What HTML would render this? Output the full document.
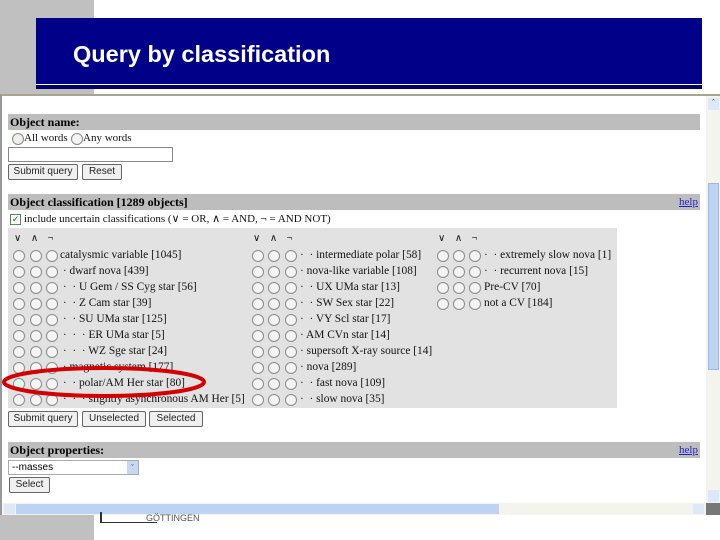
<!DOCTYPE html>
<html><head><meta charset="utf-8"><style>
body{margin:0;width:720px;height:540px;overflow:hidden;background:#fff;position:relative;font-family:"Liberation Serif",serif;}
.a{position:absolute;}
.hd{position:absolute;left:8px;width:692px;height:16px;background:#bdbdbd;font-size:12px;font-weight:bold;line-height:16px;padding-left:2px;box-sizing:border-box;}
.hd span{position:absolute;right:2px;top:0;font-weight:normal;color:#22c;text-decoration:underline;font-size:11px;}
.r{position:absolute;width:10px;height:10px;border:1px solid #8a8a8a;border-radius:50%;background:#f4f4f4;}
.t{position:absolute;font-size:11.4px;line-height:14px;white-space:nowrap;color:#111;}
.btn{position:absolute;height:14px;border:1px solid #666;border-radius:2px;background:#f0f0f0;font-family:"Liberation Sans",sans-serif;font-size:10px;line-height:14px;text-align:center;color:#222;}
</style></head><body>
<div class="a" style="left:0;top:0;width:94px;height:95px;background:#c0c0c0"></div>
<div class="a" style="left:36px;top:18px;width:666px;height:66px;background:#000088"></div>
<div class="a" style="left:36px;top:84px;width:666px;height:1px;background:#fff"></div>
<div class="a" style="left:36px;top:85px;width:666px;height:4px;background:#000066"></div>
<div class="a" style="left:73px;top:40px;color:#fff;font-family:'Liberation Sans',sans-serif;font-weight:bold;font-size:23.5px;line-height:28px">Query by classification</div>

<div class="a" style="left:0;top:94px;width:720px;height:421px;background:#fff;border-top:2px solid #a8a490;box-sizing:border-box;border-left:2px solid #999"></div>
<div class="a" style="left:706px;top:96px;width:14px;height:407px;background:#f4f4ee"></div>
<div class="a" style="left:708px;top:98px;width:11px;height:12px;background:#dde8f8;font-size:8px;text-align:center;color:#336">&#710;</div>
<div class="a" style="left:708px;top:183px;width:11px;height:187px;background:#bcd3f4;border:1px solid #9bb6e0;box-sizing:border-box"></div>
<div class="a" style="left:708px;top:490px;width:11px;height:12px;background:#dde8f8"></div>
<div class="a" style="left:2px;top:503px;width:704px;height:12px;background:#f4f4ee"></div>
<div class="a" style="left:4px;top:504px;width:11px;height:10px;background:#dde8f8"></div>
<div class="a" style="left:16px;top:504px;width:483px;height:10px;background:#bcd3f4"></div>
<div class="a" style="left:693px;top:504px;width:11px;height:10px;background:#dde8f8"></div>
<div class="a" style="left:706px;top:503px;width:14px;height:12px;background:#777"></div>
<div class="a" style="left:0;top:515px;width:94px;height:25px;background:#c0c0c0"></div>
<div class="a" style="left:100px;top:512px;width:55px;height:10px;border-bottom:1px solid #333;border-left:2px solid #333"></div>
<div class="t" style="left:146px;top:511px;font-size:9px;font-family:'Liberation Sans',sans-serif;color:#555">GÖTTINGEN</div>

<div class="hd" style="top:114px">Object name:</div>
<div class="r" style="left:12px;top:133px;background:#e8f2e8"></div>
<div class="t" style="left:24px;top:131px;font-size:11px">All words</div>
<div class="r" style="left:71px;top:133px"></div>
<div class="t" style="left:83px;top:131px;font-size:11px">Any words</div>
<div class="a" style="left:8px;top:147px;width:165px;height:15px;border:1px solid #888;box-sizing:border-box"></div>
<div class="btn" style="left:8px;top:164px;width:68px">Submit query</div>
<div class="btn" style="left:82px;top:164px;width:38px">Reset</div>

<div class="hd" style="top:194px">Object classification [1289 objects]<span>help</span></div>
<div class="a" style="left:10px;top:214px;width:9px;height:9px;border:1px solid #5a8a5a;font-size:9px;line-height:9px;color:#080;text-align:center">&#10003;</div>
<div class="t" style="left:24px;top:212px;font-size:11px">include uncertain classifications (∨ = OR, ∧ = AND, ¬ = AND NOT)</div>

<div class="a" style="left:8px;top:228px;width:609px;height:180px;background:#e2e2e2"></div>
<div class="t" style="left:14px;top:232px;font-size:10px;word-spacing:7px">∨ ∧ ¬</div>
<div class="t" style="left:253px;top:232px;font-size:10px;word-spacing:7px">∨ ∧ ¬</div>
<div class="t" style="left:438px;top:232px;font-size:10px;word-spacing:7px">∨ ∧ ¬</div>

<!-- col1 -->
<div class="r" style="left:13px;top:250px"></div><div class="r" style="left:30px;top:250px"></div><div class="r" style="left:46px;top:250px"></div><div class="t" style="left:60px;top:248px">catalysmic variable [1045]</div>
<div class="r" style="left:13px;top:266px"></div><div class="r" style="left:30px;top:266px"></div><div class="r" style="left:46px;top:266px"></div><div class="t" style="left:60px;top:264px">&nbsp;· dwarf nova [439]</div>
<div class="r" style="left:13px;top:282px"></div><div class="r" style="left:30px;top:282px"></div><div class="r" style="left:46px;top:282px"></div><div class="t" style="left:60px;top:280px">&nbsp;· &nbsp;· U Gem / SS Cyg star [56]</div>
<div class="r" style="left:13px;top:298px"></div><div class="r" style="left:30px;top:298px"></div><div class="r" style="left:46px;top:298px"></div><div class="t" style="left:60px;top:296px">&nbsp;· &nbsp;· Z Cam star [39]</div>
<div class="r" style="left:13px;top:314px"></div><div class="r" style="left:30px;top:314px"></div><div class="r" style="left:46px;top:314px"></div><div class="t" style="left:60px;top:312px">&nbsp;· &nbsp;· SU UMa star [125]</div>
<div class="r" style="left:13px;top:330px"></div><div class="r" style="left:30px;top:330px"></div><div class="r" style="left:46px;top:330px"></div><div class="t" style="left:60px;top:328px">&nbsp;· &nbsp;· &nbsp;· ER UMa star [5]</div>
<div class="r" style="left:13px;top:346px"></div><div class="r" style="left:30px;top:346px"></div><div class="r" style="left:46px;top:346px"></div><div class="t" style="left:60px;top:344px">&nbsp;· &nbsp;· &nbsp;· WZ Sge star [24]</div>
<div class="r" style="left:13px;top:362px"></div><div class="r" style="left:30px;top:362px"></div><div class="r" style="left:46px;top:362px"></div><div class="t" style="left:60px;top:360px">&nbsp;· magnetic system [177]</div>
<div class="r" style="left:13px;top:378px;background:#dfe"></div><div class="r" style="left:30px;top:378px"></div><div class="r" style="left:46px;top:378px"></div><div class="t" style="left:60px;top:376px">&nbsp;· &nbsp;· polar/AM Her star [80]</div>
<div class="r" style="left:13px;top:394px"></div><div class="r" style="left:30px;top:394px"></div><div class="r" style="left:46px;top:394px"></div><div class="t" style="left:60px;top:392px">&nbsp;· &nbsp;· &nbsp;· slightly asynchronous AM Her [5]</div>

<!-- col2 -->
<div class="r" style="left:252px;top:250px"></div><div class="r" style="left:268px;top:250px"></div><div class="r" style="left:285px;top:250px"></div><div class="t" style="left:300px;top:248px">· &nbsp;· intermediate polar [58]</div>
<div class="r" style="left:252px;top:266px"></div><div class="r" style="left:268px;top:266px"></div><div class="r" style="left:285px;top:266px"></div><div class="t" style="left:300px;top:264px">· nova-like variable [108]</div>
<div class="r" style="left:252px;top:282px"></div><div class="r" style="left:268px;top:282px"></div><div class="r" style="left:285px;top:282px"></div><div class="t" style="left:300px;top:280px">· &nbsp;· UX UMa star [13]</div>
<div class="r" style="left:252px;top:298px"></div><div class="r" style="left:268px;top:298px"></div><div class="r" style="left:285px;top:298px"></div><div class="t" style="left:300px;top:296px">· &nbsp;· SW Sex star [22]</div>
<div class="r" style="left:252px;top:314px"></div><div class="r" style="left:268px;top:314px"></div><div class="r" style="left:285px;top:314px"></div><div class="t" style="left:300px;top:312px">· &nbsp;· VY Scl star [17]</div>
<div class="r" style="left:252px;top:330px"></div><div class="r" style="left:268px;top:330px"></div><div class="r" style="left:285px;top:330px"></div><div class="t" style="left:300px;top:328px">· AM CVn star [14]</div>
<div class="r" style="left:252px;top:346px"></div><div class="r" style="left:268px;top:346px"></div><div class="r" style="left:285px;top:346px"></div><div class="t" style="left:300px;top:344px">· supersoft X-ray source [14]</div>
<div class="r" style="left:252px;top:362px"></div><div class="r" style="left:268px;top:362px"></div><div class="r" style="left:285px;top:362px"></div><div class="t" style="left:300px;top:360px">· nova [289]</div>
<div class="r" style="left:252px;top:378px"></div><div class="r" style="left:268px;top:378px"></div><div class="r" style="left:285px;top:378px"></div><div class="t" style="left:300px;top:376px">· &nbsp;· fast nova [109]</div>
<div class="r" style="left:252px;top:394px"></div><div class="r" style="left:268px;top:394px"></div><div class="r" style="left:285px;top:394px"></div><div class="t" style="left:300px;top:392px">· &nbsp;· slow nova [35]</div>

<!-- col3 -->
<div class="r" style="left:437px;top:250px"></div><div class="r" style="left:453px;top:250px"></div><div class="r" style="left:469px;top:250px"></div><div class="t" style="left:484px;top:248px">· &nbsp;· extremely slow nova [1]</div>
<div class="r" style="left:437px;top:266px"></div><div class="r" style="left:453px;top:266px"></div><div class="r" style="left:469px;top:266px"></div><div class="t" style="left:484px;top:264px">· &nbsp;· recurrent nova [15]</div>
<div class="r" style="left:437px;top:282px"></div><div class="r" style="left:453px;top:282px"></div><div class="r" style="left:469px;top:282px"></div><div class="t" style="left:484px;top:280px">Pre-CV [70]</div>
<div class="r" style="left:437px;top:298px"></div><div class="r" style="left:453px;top:298px"></div><div class="r" style="left:469px;top:298px"></div><div class="t" style="left:484px;top:296px">not a CV [184]</div>

<svg class="a" style="left:0;top:360px" width="215" height="45"><ellipse cx="104" cy="22" rx="100" ry="14" fill="none" stroke="#d40000" stroke-width="4"/></svg>

<div class="btn" style="left:8px;top:411px;width:68px">Submit query</div>
<div class="btn" style="left:82px;top:411px;width:62px">Unselected</div>
<div class="btn" style="left:149px;top:411px;width:52px">Selected</div>

<div class="hd" style="top:442px">Object properties:<span>help</span></div>
<div class="a" style="left:8px;top:460px;width:131px;height:15px;border:1px solid #aaa;box-sizing:border-box;font-family:'Liberation Sans',sans-serif;font-size:10px;line-height:13px;padding-left:3px">--masses</div>
<div class="a" style="left:127px;top:461px;width:11px;height:13px;background:#c8d8f4;font-size:8px;text-align:center;line-height:13px;color:#335">&#711;</div>
<div class="btn" style="left:9px;top:477px;width:39px">Select</div>
</body></html>
